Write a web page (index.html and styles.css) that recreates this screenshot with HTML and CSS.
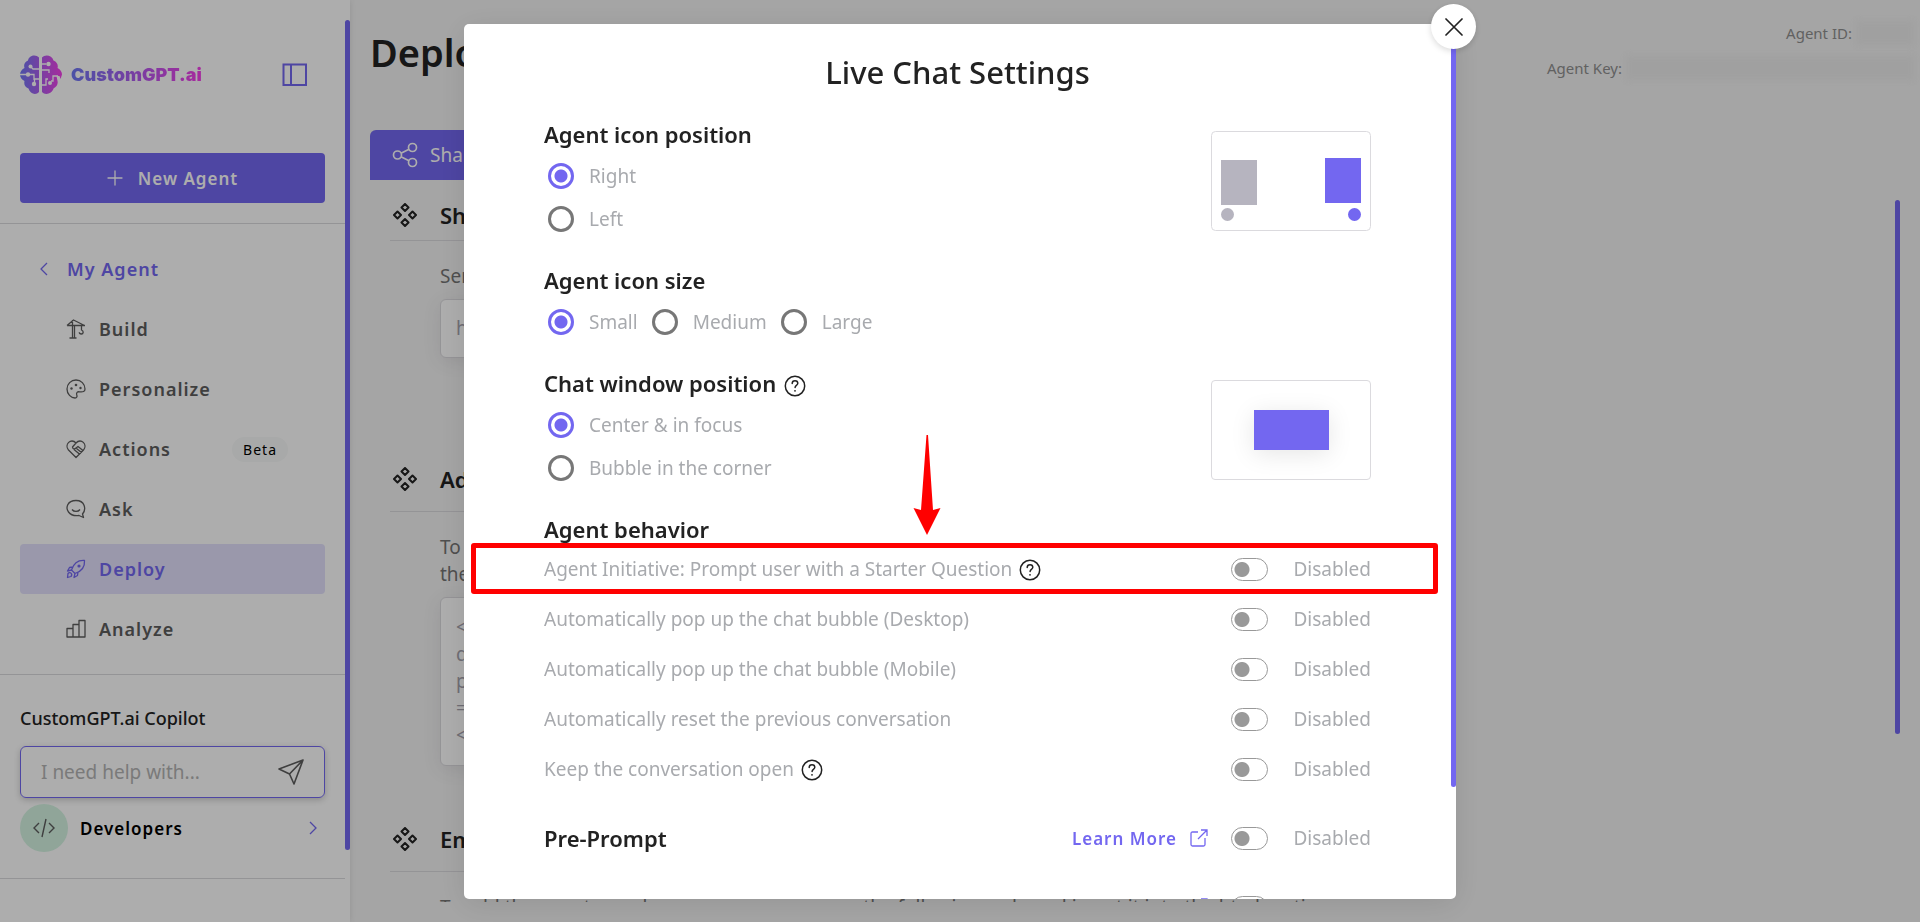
FILE: index.html
```html
<!DOCTYPE html>
<html lang="en">
<head>
    <meta charset="UTF-8">
    <meta name="viewport" content="width=device-width, initial-scale=1.0">
    <title>Deploy - CustomGPT.ai</title>
    <link rel="stylesheet" href="styles.css">
</head>
<body>

<!-- Shared icons -->
<svg class="sprite" aria-hidden="true">
    <symbol id="i-help" viewBox="0 0 22 22">
        <circle cx="11" cy="11" r="9.7" fill="none" stroke="currentColor" stroke-width="1.5"/>
        <path d="M8.2 8.4c0-1.500 1.200-2.700 2.800-2.700s2.800 1.100 2.800 2.600c0 2-2.700 2.100-2.700 4.100" fill="none" stroke="currentColor" stroke-width="1.500" stroke-linecap="round"/>
        <circle cx="11" cy="15.800" r=".9" fill="currentColor"/>
    </symbol>
    <symbol id="i-diamonds" viewBox="0 0 24 24">
        <g fill="none" stroke="currentColor" stroke-width="2" stroke-linejoin="round">
            <path d="M12 1l3.500 3.500L12 8 8.500 4.500zM12 16l3.500 3.500L12 23l-3.500-3.500zM4.500 8.500L8 12l-3.500 3.500L1 12zM19.500 8.500L23 12l-3.500 3.500L16 12z"/>
        </g>
    </symbol>
    <symbol id="i-external" viewBox="0 0 18 18">
        <path d="M8 3H2.500Q1 3 1 4.500v11Q1 17 2.500 17h11q1.500 0 1.500-1.500V9M11 1h6v6M17 1L8 10" fill="none" stroke="currentColor" stroke-width="1.300"/>
    </symbol>
</svg>

<div class="layout">
    <aside class="sidebar">
        <div class="brand">
            <svg class="brand-mark" viewBox="0 0 42 39" aria-hidden="true">
                <defs>
                    <linearGradient id="brand" x1="0" x2="1" y1="0" y2="0">
                        <stop offset="0" stop-color="#6f79f5"/>
                        <stop offset="1" stop-color="#f53fe8"/>
                    </linearGradient>
                </defs>
                <path fill="url(#brand)" d="M19 2.500C16-1 9 0 8 5.500 4.500 7 3.500 10 4.500 13 1.500 14.500 0 17 0 19.500s1.500 5 4.500 6.500c-.8 3.500.5 6 4 7.500 1.500 5.500 7.500 7 10.500 3.500zM22 2.500C25-1 32 0 33.500 5.500c3.500 1.500 5 4.500 4 7.500 3 1.500 4.500 4 4.500 6.500L40.500 24l-1-3h-3l1 5c.8 3.500-1 6-4 7.500C32 39 25 40.500 22 37z"/>
                <g fill="none" stroke="#fff" stroke-width="1.300">
                    <path d="M19 14h-6l-2-2M0 19.500h6M9 19.500h5V25M19 24h-4.500v3.500M22 9h4.500M22 15h7v3M22 30h4v-6h2M38 21h-5v5h-2"/>
                </g>
                <g fill="#fff">
                    <circle cx="10.500" cy="11.500" r="2"/><circle cx="8" cy="19.500" r="2.200"/><circle cx="14" cy="29" r="2.200"/>
                    <circle cx="28.500" cy="9" r="2.200"/><circle cx="30" cy="28" r="2"/>
                </g>
            </svg>
            <span class="brand-name">CustomGPT.ai</span>
            <button class="collapse" aria-label="Collapse sidebar">
                <svg width="26" height="24" viewBox="0 0 26 24"><path d="M1.500 1.500h22.500v20.500H1.500zM9 1.500V22" fill="none" stroke="currentColor" stroke-width="2"/></svg>
            </button>
        </div>

        <button class="new-agent">
            <svg width="16" height="16" viewBox="0 0 16 16"><path d="M8 1v14M1 8h14" stroke="currentColor" stroke-width="1.300" stroke-linecap="round"/></svg>
            New Agent
        </button>

        <nav class="menu">
            <a href="#" class="menu-back">
                <svg width="10" height="14" viewBox="0 0 10 14"><path d="M8 1L2 7l6 6" fill="none" stroke="currentColor" stroke-width="1.300"/></svg>
                My Agent
            </a>
            <a href="#">
                <svg viewBox="0 0 20 20"><path d="M1 6.500h18M6.500 1v17.500M8.500 6.500v12M3.500 19h7M1 6.500L7.500 1l11 5.500M15.500 6.500V11c2.500 1 2 4-.2 4-1.300 0-2-.8-2-1.800"/></svg>
                Build
            </a>
            <a href="#">
                <svg viewBox="0 0 20 20"><path d="M10 1C5 1 1 5 1 10s4 9 8 9c1.800 0 2.400-1.500 1.800-3-.8-2.400.6-3.500 2.700-3.200C17 13.300 19 12.500 19 10c0-5-4-9-9-9z"/><g class="dot"><circle cx="5.500" cy="9.500" r="1.200"/><circle cx="10" cy="6" r="1.300"/><circle cx="14.500" cy="9" r="1.200"/></g></svg>
                Personalize
            </a>
            <a href="#">
                <svg viewBox="0 0 20 20"><path d="M10 18.500L2.500 11C-2 5.500 5-1.500 10 4c5-5.500 12 1.500 7.500 7zM10 4L6.500 8c0 2 2 2.500 3.500 1l2-1.500 5 4M8 10.500l6 5M10.500 9.500l5 4"/></svg>
                Actions
                <span class="beta">Beta</span>
            </a>
            <a href="#">
                <svg viewBox="0 0 20 20"><path d="M17.500 18.500l-1-3.500c4-4.500 2.500-13.500-6.500-13.500S-.5 9 2.500 13s7 4 10.500 3.500zM6 10.500c2 2.600 6 2.600 8 0"/></svg>
                Ask
            </a>
            <a href="#" class="active">
                <svg viewBox="0 0 20 20"><path d="M5.500 11C7.500 5 12 1 18.500 1.500 19 8 15 12.500 9 14.500zM7 8L3.500 8.500 1.500 12l4-1M12 13l-.500 3.500L8 18.500l1-4M2 14.500c2-2.500 5 .5 3 3L1.500 18.500z"/><g class="dot"><circle cx="13" cy="7" r="1.600"/></g></svg>
                Deploy
            </a>
            <a href="#">
                <svg viewBox="0 0 20 20"><path d="M1 18V9.500h6V18zM7 18V5.500h6V18zM13 18V1.500h6V18z"/></svg>
                Analyze
            </a>
        </nav>

        <div class="copilot">
            <label class="copilot-title" for="copilot-input">CustomGPT.ai Copilot</label>
            <div class="copilot-box">
                <input id="copilot-input" type="text" placeholder="I need help with...">
                <button aria-label="Send">
                    <svg width="26" height="26" viewBox="0 0 26 26"><path d="M25 1L1 10l10.500 5L16 25zM25 1L11.500 15" fill="none" stroke="currentColor" stroke-width="1.600" stroke-linejoin="round"/></svg>
                </button>
            </div>
            <a href="#" class="developers">
                <span class="developers-icon">
                    <svg width="22" height="20" viewBox="0 0 22 20"><path d="M6 5l-5 5 5 5M16 5l5 5-5 5M13 1L9 19" fill="none" stroke="currentColor" stroke-width="1.400"/></svg>
                </span>
                Developers
                <svg class="chevron" width="9" height="14" viewBox="0 0 9 14"><path d="M1 1l6 6-6 6" fill="none" stroke="currentColor" stroke-width="1.300"/></svg>
            </a>
        </div>
        <span class="thumb sidebar-thumb"></span>
    </aside>

    <main class="main">
        <header class="page-head">
            <h1>Deploy</h1>
            <dl class="agent-info">
                <div><dt>Agent ID:</dt><dd class="redacted short"></dd></div>
                <div><dt>Agent Key:</dt><dd class="redacted"></dd></div>
            </dl>
        </header>

        <div class="tabs">
            <button class="tab">
                <svg width="26" height="26" viewBox="0 0 26 26" fill="none" stroke="currentColor" stroke-width="1.700"><circle cx="5.500" cy="13" r="4"/><circle cx="20.500" cy="5.500" r="4"/><circle cx="20.500" cy="20.500" r="4"/><path d="M9 11.200l8-4M9 14.800l8 4"/></svg>
                Share
            </button>
        </div>

        <div class="panel">
            <div class="sections">
                <section class="section section-first">
                    <h2 class="section-head"><svg><use href="#i-diamonds"/></svg>Share</h2>
                    <div class="section-body">
                        <p>Send a link</p>
                        <div class="code-box">https://</div>
                    </div>
                </section>
                <section class="section">
                    <h2 class="section-head"><svg><use href="#i-diamonds"/></svg>Add</h2>
                    <div class="section-body">
                        <p>To add<br>the agent</p>
                        <pre class="code-box">&lt;div
defer
p_id
=
&lt;/div&gt;</pre>
                    </div>
                </section>
                <section class="section">
                    <h2 class="section-head"><svg><use href="#i-diamonds"/></svg>Embed</h2>
                    <div class="section-body">
                        <p>To add the agent anywhere on your page, copy the following code and insert it into the html section of</p>
                    </div>
                </section>
            </div>
            <span class="thumb panel-thumb"></span>
        </div>
    </main>
</div>

<div class="overlay">
    <div class="modal" role="dialog" aria-labelledby="modal-title">
        <button class="close" aria-label="Close">
            <svg width="18" height="18" viewBox="0 0 18 18"><path d="M1 1l16 16M17 1L1 17" stroke="currentColor" stroke-width="1.700" stroke-linecap="round"/></svg>
        </button>
        <div class="modal-body">
            <h2 id="modal-title">Live Chat Settings</h2>

            <section class="group">
                <div>
                    <h3>Agent icon position</h3>
                    <div class="radios">
                        <label><input type="radio" name="icon-position" checked>Right</label>
                        <label><input type="radio" name="icon-position">Left</label>
                    </div>
                </div>
                <svg class="preview" viewBox="0 0 160 100">
                    <rect x=".5" y=".5" width="159" height="99" rx="4" fill="#fff" stroke="#dbdade"/>
                    <path d="M10 29h36v45H10z" fill="#b6b4bf"/><circle cx="16.500" cy="83.500" r="6.500" fill="#b6b4bf"/>
                    <path d="M114 27h36v45h-36z" fill="#7367f0"/><circle cx="143.500" cy="83.500" r="6.500" fill="#7367f0"/>
                </svg>
            </section>

            <section class="group">
                <div>
                    <h3>Agent icon size</h3>
                    <div class="radios inline">
                        <label><input type="radio" name="icon-size" checked>Small</label>
                        <label><input type="radio" name="icon-size">Medium</label>
                        <label><input type="radio" name="icon-size">Large</label>
                    </div>
                </div>
            </section>

            <section class="group">
                <div>
                    <h3>Chat window position <svg class="help"><use href="#i-help"/></svg></h3>
                    <div class="radios">
                        <label><input type="radio" name="window-position" checked>Center &amp; in focus</label>
                        <label><input type="radio" name="window-position">Bubble in the corner</label>
                    </div>
                </div>
                <div class="preview preview-center"><span></span></div>
            </section>

            <section>
                <h3>Agent behavior</h3>
                <div class="row">
                    <span class="row-name">Agent Initiative: Prompt user with a Starter Question <svg class="help"><use href="#i-help"/></svg></span>
                    <label class="switch"><input type="checkbox"><span>Disabled</span></label>
                </div>
                <div class="row">
                    <span class="row-name">Automatically pop up the chat bubble (Desktop)</span>
                    <label class="switch"><input type="checkbox"><span>Disabled</span></label>
                </div>
                <div class="row">
                    <span class="row-name">Automatically pop up the chat bubble (Mobile)</span>
                    <label class="switch"><input type="checkbox"><span>Disabled</span></label>
                </div>
                <div class="row">
                    <span class="row-name">Automatically reset the previous conversation</span>
                    <label class="switch"><input type="checkbox"><span>Disabled</span></label>
                </div>
                <div class="row">
                    <span class="row-name">Keep the conversation open <svg class="help"><use href="#i-help"/></svg></span>
                    <label class="switch"><input type="checkbox"><span>Disabled</span></label>
                </div>
            </section>

            <div class="row extra">
                <h3>Pre-Prompt</h3>
                <a href="#" class="learn">Learn More <svg><use href="#i-external"/></svg></a>
                <label class="switch"><input type="checkbox"><span>Disabled</span></label>
            </div>
            <div class="row extra">
                <a href="#" class="learn" aria-label="Learn More"><svg><use href="#i-external"/></svg></a>
                <label class="switch"><input type="checkbox" aria-label="Enabled"><span></span></label>
            </div>
        </div>
        <span class="thumb modal-thumb"></span>

        <!-- Callout over the first behavior row -->
        <div class="callout"></div>
        <svg class="callout-arrow" viewBox="0 0 28 100"><path d="M13.500 0h1.500l5 75 7.500-2L14 100 .5 73 8 75z" fill="#f00"/></svg>
    </div>
</div>

</body>
</html>
```

FILE: styles.css
```css
:root {
    --primary: #7367f0;
    --heading: #222;
    --muted: #a8aaae;
    --border: #dbdade;
}

* {
    box-sizing: border-box;
}

body {
    margin: 0;
    height: 100vh;
    overflow: hidden;
    font-family: "Noto Sans", "Open Sans", sans-serif;
    font-size: 19px;
    color: #757575;
    background: #f3f3f3;
}

h1, h2, h3, p, dl, dd, pre {
    margin: 0;
    font-family: inherit;
}

button {
    border: 0;
    padding: 0;
    background: none;
    font: inherit;
    color: inherit;
    cursor: pointer;
}

a {
    color: inherit;
    text-decoration: none;
}

.sprite {
    position: absolute;
    width: 0;
    height: 0;
}

.thumb {
    width: 5px;
    border-radius: 3px;
    background: var(--primary);
}

.layout {
    display: flex;
    height: 100vh;
}

/* Sidebar */
.sidebar {
    position: relative;
    flex: 0 0 350px;
    min-width: 0;
    padding-right: 5px;
    background: #fff;
    box-shadow: 0 0 6px rgba(0, 0, 0, 0.1);
}

.sidebar-thumb {
    position: absolute;
    top: 20px;
    right: 0;
    height: 90%;
}

.brand {
    display: flex;
    align-items: center;
    height: 149px;
    padding: 0 37px 0 20px;
}

.brand-mark {
    width: 42px;
    height: 39px;
    margin-right: 9px;
}

.brand-name {
    font: 900 18px Inter, sans-serif;
    color: transparent;
    background: linear-gradient(90deg, #6f79f5, #f53fe8);
    background-clip: text;
    -webkit-background-clip: text;
}

.collapse {
    height: 24px;
    margin-left: auto;
    color: var(--primary);
}

.new-agent {
    display: flex;
    align-items: center;
    justify-content: center;
    gap: 15px;
    width: 305px;
    height: 50px;
    margin: 4px 20px 20px;
    border-radius: 4px;
    background: var(--primary);
    color: #fff;
    font-size: 17px;
    font-weight: 600;
    letter-spacing: 1px;
}

.menu {
    display: flex;
    flex-direction: column;
    gap: 10px;
    padding: 20px;
    border-top: 1px solid var(--border);
    border-bottom: 1px solid var(--border);
    font-size: 18px;
    font-weight: 600;
    letter-spacing: 1px;
    color: #5d5d5d;
}

.menu a {
    display: flex;
    align-items: center;
    gap: 13px;
    height: 50px;
    padding: 0 37px 0 46px;
    border-radius: 4px;
}

.menu a svg {
    width: 20px;
    height: 20px;
    fill: none;
    stroke: currentColor;
    stroke-width: 1.3;
    stroke-linejoin: round;
}

.menu .dot {
    fill: currentColor;
    stroke: none;
}

.menu .menu-back {
    padding-left: 19px;
    gap: 18px;
    color: var(--primary);
}

.menu .menu-back svg {
    width: 10px;
    height: 14px;
}

.menu .active {
    background: #e3e1fc;
    color: var(--primary);
}

.beta {
    margin-left: auto;
    padding: 0 11px;
    border-radius: 13px;
    background: #f8faf9;
    color: #000;
    font-size: 14px;
    font-weight: 400;
    line-height: 25px;
}

.copilot {
    padding: 28px 20px 26px;
    border-bottom: 1px solid var(--border);
}

.copilot-title {
    display: block;
    margin-bottom: 13px;
    line-height: 30px;
    font-size: 18px;
    font-weight: 500;
    color: var(--heading);
}

.copilot-box {
    display: flex;
    align-items: center;
    height: 52px;
    margin-bottom: 6px;
    padding: 0 20px;
    border: 1px solid var(--primary);
    border-radius: 6px;
    box-shadow: 0 2px 6px rgba(0, 0, 0, 0.2);
    color: #5d5d5d;
}

.copilot-box input {
    flex: 1;
    width: 100%;
    min-width: 0;
    border: 0;
    padding: 0;
    outline: 0;
    background: none;
    font: inherit;
}

.copilot-box input::placeholder {
    color: #b4b4b4;
}

.copilot-box button {
    height: 26px;
}

.developers {
    display: flex;
    align-items: center;
    gap: 12px;
    color: #000;
    font-size: 17px;
    font-weight: 600;
    letter-spacing: 1px;
}

.developers-icon {
    display: grid;
    place-items: center;
    width: 48px;
    height: 48px;
    border-radius: 50%;
    background: #d4f4e2;
    color: #5d5d5d;
}

.chevron {
    margin: 0 7px 0 auto;
    color: var(--primary);
}

/* Page behind the dialog */
.main {
    display: flex;
    flex: 1;
    flex-direction: column;
    min-width: 0;
    padding: 0 20px;
}

.page-head {
    display: flex;
    justify-content: space-between;
    height: 130px;
}

.page-head h1 {
    line-height: 104px;
    font-size: 38px;
    font-weight: 600;
    color: var(--heading);
}

.agent-info {
    display: flex;
    flex-direction: column;
    align-items: flex-end;
    gap: 9px;
    margin: 20px -14px 0 0;
    font-size: 15px;
    line-height: 26px;
    color: #8f8f8f;
}

.agent-info div {
    display: flex;
    align-items: center;
    gap: 4px;
}

.redacted {
    width: 288px;
    height: 24px;
    background: #ececec;
    filter: blur(3px);
}

.redacted.short {
    width: 58px;
}

.tabs {
    max-width: 1000px;
    border-radius: 6px 6px 0 0;
    background: var(--primary);
}

.tab {
    display: flex;
    align-items: center;
    gap: 12px;
    height: 50px;
    padding: 0 22px;
    color: #fff;
}

.panel {
    display: flex;
    flex: 1;
    justify-content: space-between;
    min-height: 0;
    margin-bottom: 20px;
    overflow: hidden;
}

.panel-thumb {
    height: 534px;
    margin-top: 20px;
}

.sections {
    width: 960px;
    padding: 10px 0 0 20px;
}

.section {
    margin-bottom: 40px;
}

.section-head {
    display: flex;
    align-items: center;
    gap: 23px;
    height: 66px;
    padding-left: 3px;
    border-bottom: 1px solid var(--border);
    font-size: 22px;
    font-weight: 600;
    color: var(--heading);
}

.section-head svg {
    width: 24px;
    height: 24px;
}

.section-first {
    margin-bottom: 88px;
}

.section-first .section-head {
    height: 51px;
}

.section-body {
    padding: 22px 0 0 50px;
    line-height: 27px;
}

.code-box {
    margin-top: 9px;
    padding: 15px;
    border: 1px solid var(--border);
    border-radius: 6px;
    background: #fff;
    box-shadow: 0 4px 18px rgba(75, 70, 92, 0.1);
    color: #a5a3ae;
}

pre.code-box {
    padding: 16px 15px;
}

/* Dialog */
.overlay {
    position: fixed;
    inset: 0;
    display: flex;
    justify-content: center;
    padding: 24px 0 23px;
    background: rgba(0, 0, 0, 0.32);
}

.modal {
    position: relative;
    width: 992px;
    max-width: 100%;
    border-radius: 5px;
    background: #fff;
    box-shadow: 0 5px 30px rgba(0, 0, 0, 0.1);
}

.modal-body {
    height: 100%;
    overflow: hidden;
    padding: 28px 85px 0 80px;
}

.modal-thumb {
    position: absolute;
    top: 0;
    right: 0;
    height: 763px;
}

.close {
    position: absolute;
    top: -20px;
    right: -20px;
    z-index: 1;
    display: grid;
    place-items: center;
    width: 45px;
    height: 45px;
    border-radius: 50%;
    background: #fff;
    box-shadow: 0 2px 6px rgba(0, 0, 0, 0.15);
    color: var(--heading);
}

#modal-title {
    margin-bottom: 27px;
    line-height: 40px;
    font-size: 31px;
    font-weight: 500;
    text-align: center;
    color: var(--heading);
}

.modal h3 {
    line-height: 30px;
    font-size: 22px;
    font-weight: 600;
    color: var(--heading);
}

.group {
    display: flex;
    justify-content: space-between;
    margin-bottom: 25px;
}

.radios {
    display: flex;
    flex-direction: column;
    padding-top: 5px;
}

.radios.inline {
    flex-direction: row;
    gap: 10px;
}

.radios label {
    display: flex;
    align-items: center;
    gap: 15px;
    height: 43px;
    padding-left: 4px;
    color: var(--muted);
}

.radios input {
    appearance: none;
    width: 26px;
    height: 26px;
    margin: 0;
    border: 3px solid #777;
    border-radius: 50%;
}

.radios input:checked {
    border-color: var(--primary);
    background: radial-gradient(circle, var(--primary) 6px, transparent 7px);
}

.preview {
    width: 160px;
    height: 100px;
    margin-top: 12px;
}

.preview-center {
    display: grid;
    place-items: center;
    border: 1px solid var(--border);
    border-radius: 4px;
}

.preview-center span {
    width: 75px;
    height: 40px;
    background: var(--primary);
    box-shadow: 0 4px 24px rgba(0, 0, 0, 0.1);
}

.help {
    width: 22px;
    height: 22px;
    margin-left: 2px;
    vertical-align: -5px;
    color: var(--heading);
}

.row {
    display: flex;
    align-items: center;
    height: 50px;
    color: var(--muted);
}

.extra {
    margin-top: 19px;
}

.switch {
    display: flex;
    align-items: center;
    margin-left: auto;
}

.switch input {
    appearance: none;
    width: 37px;
    height: 23px;
    margin: 0;
    border: 1px solid #999;
    border-radius: 12px;
    background: radial-gradient(circle at 10px 50%, #999 7px, transparent 8px);
}

.switch span {
    width: 103px;
    text-align: right;
}

.learn {
    display: flex;
    align-items: center;
    gap: 13px;
    margin-left: auto;
    color: var(--primary);
    font-size: 17px;
    font-weight: 600;
    letter-spacing: 1px;
}

.learn svg {
    width: 18px;
    height: 18px;
}

.learn + .switch {
    margin-left: 23px;
}

.callout {
    position: absolute;
    top: 519px;
    left: 7px;
    right: 18px;
    height: 51px;
    border: 5px solid #f00;
    border-radius: 3px;
}

.callout-arrow {
    position: absolute;
    top: 411px;
    left: 449px;
    width: 28px;
    height: 100px;
}
```
